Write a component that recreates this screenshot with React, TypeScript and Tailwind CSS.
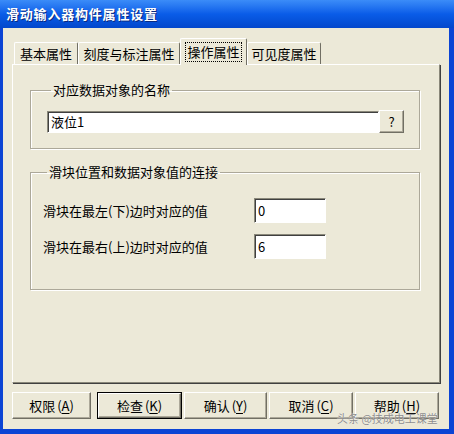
import React from "react";

// Classic Windows XP dialog: "滑动输入器构件属性设置"

const tabs = [
  { label: "基本属性", w: "w-[64px]" },
  { label: "刻度与标注属性", w: "w-[102px]" },
  { label: "操作属性", w: "w-[67px]", active: true },
  { label: "可见度属性", w: "w-[74px]" },
];

const raised =
  "border border-t-white border-l-white border-r-[#716f64] border-b-[#716f64] shadow-[inset_-1px_-1px_0_#aca899]";
const sunken =
  "border border-t-[#8a887a] border-l-[#8a887a] border-r-white border-b-white shadow-[inset_1px_1px_0_#404040]";

function Hot({ text, hot }: { text: string; hot: string }) {
  return (
    <span>
      {text}
      <span className="ml-[2px]">(</span>
      <span className="underline underline-offset-2">{hot}</span>)
    </span>
  );
}

function DlgButton({
  text,
  hot,
  w,
  def,
  className = "",
}: {
  text: string;
  hot: string;
  w: string;
  def?: boolean;
  className?: string;
}) {
  return (
    <div
      className={`${w} h-[27px] ${className} ${
        def ? "border border-black" : ""
      }`}
    >
      <div
        className={`flex h-full w-full items-center justify-center ${raised} text-[13px] text-black`}
      >
        <Hot text={text} hot={hot} />
      </div>
    </div>
  );
}

function Group({
  title,
  className = "",
  children,
}: {
  title: string;
  className?: string;
  children: React.ReactNode;
}) {
  return (
    <fieldset
      className={`border border-[#aca899] shadow-[1px_1px_0_#fff,inset_1px_1px_0_#fff] ${className}`}
    >
      <legend className="ml-[4px] px-[2px] text-[13px] leading-[16px] text-black">
        {title}
      </legend>
      {children}
    </fieldset>
  );
}

export default function App() {
  return (
    <div className="relative flex h-[434px] w-[454px] flex-col bg-[#0b44d4] font-['Noto_Sans_CJK_SC','DejaVu_Sans',sans-serif]">
      {/* Title bar */}
      <div className="flex h-[28px] items-center bg-gradient-to-b from-[#3b8cf8] via-[#0a5ce8] to-[#0347cc] pl-[6px]">
        <span className="text-[13px] font-bold tracking-[0.8px] text-white [text-shadow:1px_1px_0_#0a2a80]">
          滑动输入器构件属性设置
        </span>
      </div>

      {/* Client area */}
      <div className="mb-[5px] ml-[3px] mr-[5px] flex flex-1 flex-col bg-[#ece9d8] px-[9px] pt-[10px]">
        {/* Tabs */}
        <div className="flex h-[26px] items-end pl-[2px]">
          {tabs.map((t) =>
            t.active ? (
              <div
                key={t.label}
                className={`relative z-10 -mb-px flex h-[27px] ${t.w} items-center justify-center rounded-t-[2px] border border-b-0 border-l-white border-t-white border-r-[#716f64] bg-[#ece9d8]`}
              >
                <span className="border border-dotted border-black px-[1px] text-[13px] leading-[18px] text-black">
                  {t.label}
                </span>
              </div>
            ) : (
              <div
                key={t.label}
                className={`flex h-[22px] ${t.w} items-center justify-center rounded-t-[2px] border border-b-0 border-l-white border-t-white border-r-[#716f64] text-[13px] text-black`}
              >
                {t.label}
              </div>
            )
          )}
        </div>

        {/* Tab panel */}
        <div className="h-[319px] border border-l-white border-t-white border-r-[#8a887a] border-b-[#8a887a] pl-[17px] pr-[19px] pt-[17px] shadow-[1px_1px_0_#404040]">
          <Group title="对应数据对象的名称" className="pb-[15px] pl-[16px] pt-[12px]">
            <div className="flex items-end">
              <div
                className={`flex h-[22px] w-[332px] items-center bg-white pl-[3px] text-[13px] text-black ${sunken}`}
              >
                液位1
              </div>
              <div
                className={`flex h-[23px] w-[25px] items-center justify-center text-[13px] text-black ${raised}`}
              >
                ?
              </div>
            </div>
          </Group>

          <Group
            title="滑块位置和数据对象值的连接"
            className="mt-[15px] pb-[30px] pl-[12px] pt-[18px]"
          >
            <div className="flex flex-col gap-[11px]">
              {[
                { label: "滑块在最左(下)边时对应的值", value: "0" },
                { label: "滑块在最右(上)边时对应的值", value: "6" },
              ].map((r) => (
                <div key={r.label} className="flex items-center">
                  <span className="w-[211px] text-[13px] text-black">
                    {r.label}
                  </span>
                  <div
                    className={`flex h-[25px] w-[72px] items-center bg-white pl-[3px] text-[13px] text-black ${sunken}`}
                  >
                    {r.value}
                  </div>
                </div>
              ))}
            </div>
          </Group>
        </div>

        {/* Bottom buttons */}
        <div className="mt-[9px] flex">
          <DlgButton text="权限" hot="A" w="w-[79px]" />
          <DlgButton text="检查" hot="K" w="w-[85px]" def className="ml-[6px]" />
          <DlgButton text="确认" hot="Y" w="w-[83px]" className="ml-[2px]" />
          <DlgButton text="取消" hot="C" w="w-[84px]" className="ml-[2px]" />
          <DlgButton text="帮助" hot="H" w="w-[84px]" className="ml-[2px]" />
        </div>
      </div>

      {/* Watermark */}
      <span className="absolute left-[337px] top-[412px] whitespace-nowrap text-[11px] leading-[13px] text-[#8c8c8c] [text-shadow:0_0_1px_#fff]">
        头条 @技成电工课堂
      </span>
    </div>
  );
}
